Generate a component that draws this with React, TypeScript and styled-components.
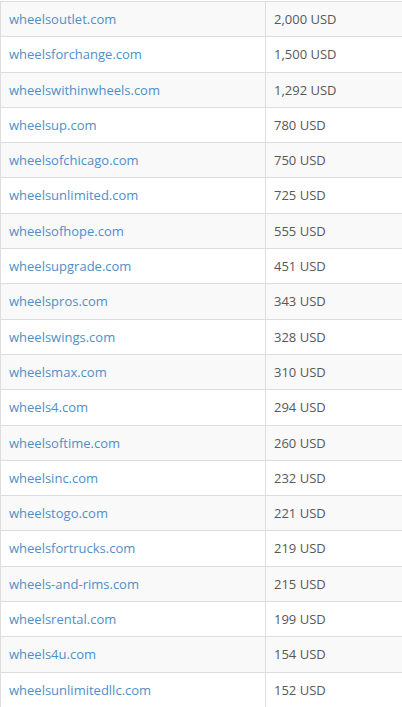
import React from "react"
import styled, { createGlobalStyle } from "styled-components"

const GlobalStyle = createGlobalStyle`
  html, body {
    margin: 0;
    padding: 0;
    background: #ffffff;
    overflow: hidden;
  }
  body {
    font-family: "Open Sans", "Liberation Sans", sans-serif;
  }
`

const StyledTable = styled.table`
  border-collapse: collapse;
  width: 420px;
  table-layout: fixed;
  font-size: 13px;
  margin-top: 1px;
`

const StyledRow = styled.tr<{ $striped: boolean }>`
  background-color: ${({ $striped }) => ($striped ? "#f9f9f9" : "#ffffff")};
`

const StyledCell = styled.td`
  border: 1px solid #dddddd;
  padding: 8px 8px;
  line-height: 18.3px;
  color: #585858;
  vertical-align: middle;
  white-space: nowrap;
`

const StyledDomainCell = styled(StyledCell)`
  width: 248px;
`

const StyledLink = styled.a`
  color: #4f8fc8;
  text-decoration: none;
`

const rows: [string, string][] = [
  ["wheelsoutlet.com", "2,000 USD"],
  ["wheelsforchange.com", "1,500 USD"],
  ["wheelswithinwheels.com", "1,292 USD"],
  ["wheelsup.com", "780 USD"],
  ["wheelsofchicago.com", "750 USD"],
  ["wheelsunlimited.com", "725 USD"],
  ["wheelsofhope.com", "555 USD"],
  ["wheelsupgrade.com", "451 USD"],
  ["wheelspros.com", "343 USD"],
  ["wheelswings.com", "328 USD"],
  ["wheelsmax.com", "310 USD"],
  ["wheels4.com", "294 USD"],
  ["wheelsoftime.com", "260 USD"],
  ["wheelsinc.com", "232 USD"],
  ["wheelstogo.com", "221 USD"],
  ["wheelsfortrucks.com", "219 USD"],
  ["wheels-and-rims.com", "215 USD"],
  ["wheelsrental.com", "199 USD"],
  ["wheels4u.com", "154 USD"],
  ["wheelsunlimitedllc.com", "152 USD"],
]

const App: React.FC = () => {
  return (
    <>
      <GlobalStyle />
      <StyledTable>
        <tbody>
          {rows.map(([domain, price], i) => (
            <StyledRow key={domain} $striped={i % 2 === 0}>
              <StyledDomainCell>
                <StyledLink href="#">{domain}</StyledLink>
              </StyledDomainCell>
              <StyledCell>{price}</StyledCell>
            </StyledRow>
          ))}
        </tbody>
      </StyledTable>
    </>
  )
}

export default App
